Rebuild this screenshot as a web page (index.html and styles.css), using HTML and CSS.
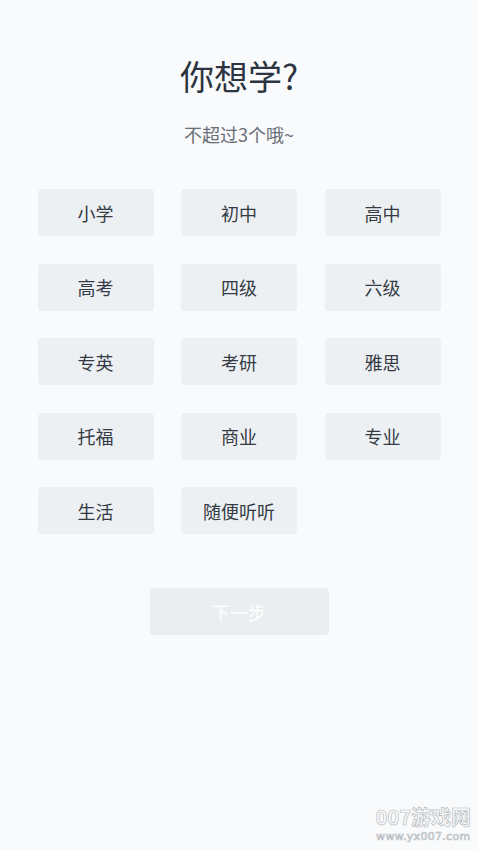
FILE: index.html
```html
<!DOCTYPE html>
<html lang="zh-CN">
<head>
    <meta charset="UTF-8">
    <title>你想学?</title>
    <link rel="stylesheet" href="styles.css">
</head>
<body>
<div class="page">
    <h1 class="title">你想学?</h1>
    <p class="subtitle">不超过3个哦~</p>

    <div class="tags">
        <button class="tag">小学</button>
        <button class="tag">初中</button>
        <button class="tag">高中</button>
        <button class="tag">高考</button>
        <button class="tag">四级</button>
        <button class="tag">六级</button>
        <button class="tag">专英</button>
        <button class="tag">考研</button>
        <button class="tag">雅思</button>
        <button class="tag">托福</button>
        <button class="tag">商业</button>
        <button class="tag">专业</button>
        <button class="tag">生活</button>
        <button class="tag">随便听听</button>
    </div>

    <div class="actions">
        <button class="next" disabled>下一步</button>
    </div>
</div>
<div class="watermark">
    <div class="wm-name">007游戏网</div>
    <div class="wm-url">www.yx007.com</div>
</div>
</body>
</html>
```

FILE: styles.css
```css
html, body {
    margin: 0;
    padding: 0;
    background-color: #f9fafb;
}

body {
    font-family: "Noto Sans CJK SC", "Noto Sans", sans-serif;
    height: 851px;
    position: relative;
    overflow: hidden;
}

.page {
    padding-top: 56px;
    text-align: center;
}

.title {
    margin: 0;
    font-size: 34px;
    line-height: 40px;
    font-weight: 400;
    color: #2b3440;
}

.subtitle {
    margin: 26px 0 0;
    font-size: 18px;
    line-height: 24px;
    color: #686e76;
}

.tags {
    margin: 43px auto 0;
    width: 403px;
    display: grid;
    grid-template-columns: repeat(3, 116px);
    column-gap: 27.5px;
    row-gap: 27.5px;
}

.tag {
    height: 47px;
    border: none;
    border-radius: 4px;
    background-color: #edf0f3;
    color: #343b45;
    font-family: inherit;
    font-size: 18px;
    padding: 0;
    cursor: pointer;
}

.actions {
    margin-top: 54px;
    display: flex;
    justify-content: center;
}

.next {
    width: 179px;
    height: 47px;
    border: none;
    border-radius: 4px;
    background-color: #ebeef1;
    color: #ffffff;
    font-family: inherit;
    font-size: 18px;
    padding: 0;
}

.watermark {
    position: absolute;
    right: 7px;
    bottom: 8px;
    text-align: center;
    color: transparent;
    -webkit-text-stroke: 0.7px #b8bcc0;
}

.wm-name {
    font-size: 20px;
    font-weight: 700;
    line-height: 20px;
}

.wm-url {
    margin-top: 4px;
    font-family: "DejaVu Sans", sans-serif;
    font-size: 11px;
    line-height: 12px;
    letter-spacing: 0.3px;
}
```
